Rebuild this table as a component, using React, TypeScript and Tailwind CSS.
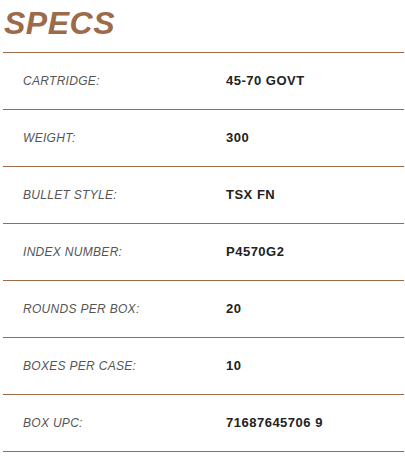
import React from "react";

const rows: [string, string][] = [
  ["CARTRIDGE:", "45-70 GOVT"],
  ["WEIGHT:", "300"],
  ["BULLET STYLE:", "TSX FN"],
  ["INDEX NUMBER:", "P4570G2"],
  ["ROUNDS PER BOX:", "20"],
  ["BOXES PER CASE:", "10"],
  ["BOX UPC:", "71687645706 9"],
];

export default function App() {
  return (
    <div className="w-[405px] h-[465px] bg-white" style={{ fontFamily: '"Liberation Sans", Arial, sans-serif' }}>
      <div className="pt-[3px] pl-[4px] h-[52px]">
        <h1 className="text-[32px] leading-[40px] font-bold italic text-[#9b6b4a] tracking-[0.5px]">SPECS</h1>
      </div>
      <div className="ml-[3px] w-[401px] border-t border-[#9b6b4a]">
        {rows.map(([k, v]) => (
          <div key={k} className="h-[57px] border-b border-[#9b6b4a] flex items-center">
            <div className="w-[223px] pl-[20px] text-[12px] italic text-[#555] tracking-[0.3px]">{k}</div>
            <div className="text-[13px] font-bold text-[#222] tracking-[0.5px]">{v}</div>
          </div>
        ))}
      </div>
    </div>
  );
}
